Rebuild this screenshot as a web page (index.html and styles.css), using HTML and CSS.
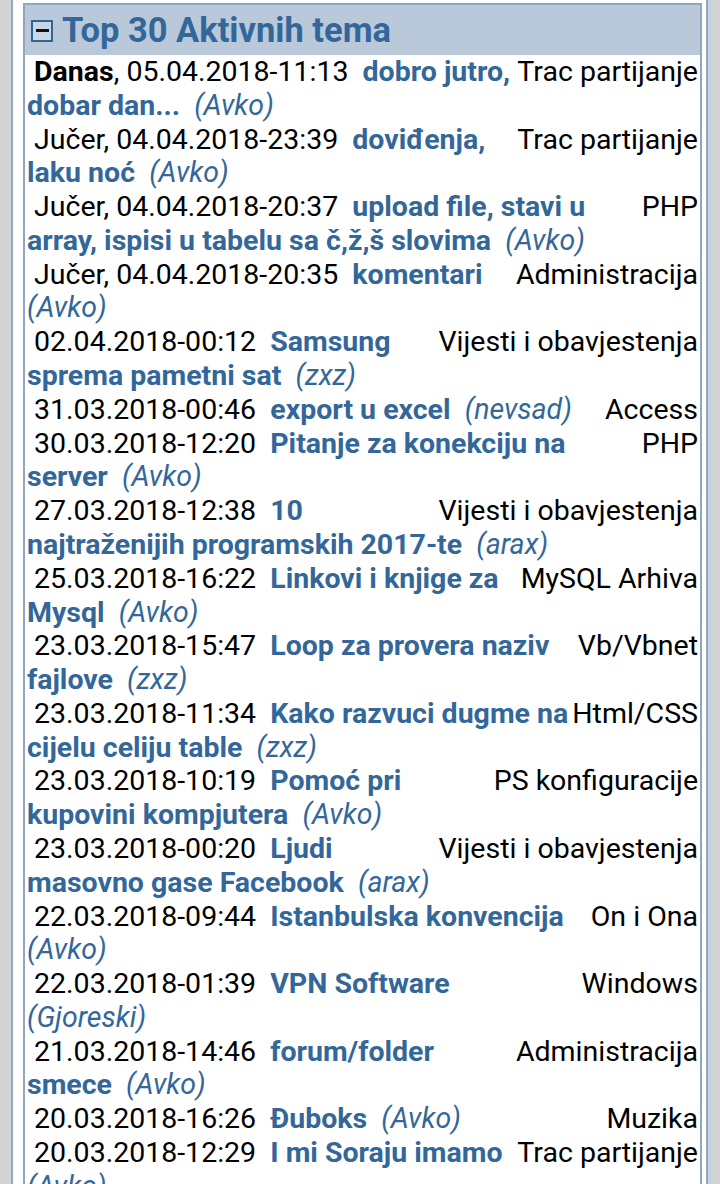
FILE: index.html
```html
<!DOCTYPE html>
<html lang="hr">
<head>
<meta charset="utf-8">
<title>Top 30 Aktivnih tema</title>
<link rel="stylesheet" href="styles.css">
</head>
<body>
<div class="frame">
  <div class="panel">
    <div class="head">
      <span class="toggle"><span class="bar"></span></span>
      <span class="title">Top 30 Aktivnih tema</span>
    </div>
    <div class="list">
      <div class="row"><span class="cat">Trac partijanje</span>&nbsp;<b>Danas</b>, 05.04.2018-11:13&nbsp; <a class="topic">dobro jutro, dobar dan...</a>&nbsp; <i class="author">(Avko)</i></div>
      <div class="row"><span class="cat">Trac partijanje</span>&nbsp;Jučer, 04.04.2018-23:39&nbsp; <a class="topic">doviđenja, laku noć</a>&nbsp; <i class="author">(Avko)</i></div>
      <div class="row"><span class="cat">PHP</span>&nbsp;Jučer, 04.04.2018-20:37&nbsp; <a class="topic">upload file, stavi u array, ispisi u tabelu sa č,ž,š slovima</a>&nbsp; <i class="author">(Avko)</i></div>
      <div class="row"><span class="cat">Administracija</span>&nbsp;Jučer, 04.04.2018-20:35&nbsp; <a class="topic">komentari</a>&nbsp; <i class="author">(Avko)</i></div>
      <div class="row"><span class="cat">Vijesti i obavjestenja</span>&nbsp;02.04.2018-00:12&nbsp; <a class="topic">Samsung sprema pametni sat</a>&nbsp; <i class="author">(zxz)</i></div>
      <div class="row"><span class="cat">Access</span>&nbsp;31.03.2018-00:46&nbsp; <a class="topic">export u excel</a>&nbsp; <i class="author">(nevsad)</i></div>
      <div class="row"><span class="cat">PHP</span>&nbsp;30.03.2018-12:20&nbsp; <a class="topic">Pitanje za konekciju na server</a>&nbsp; <i class="author">(Avko)</i></div>
      <div class="row"><span class="cat">Vijesti i obavjestenja</span>&nbsp;27.03.2018-12:38&nbsp; <a class="topic">10 najtraženijih programskih 2017-te</a>&nbsp; <i class="author">(arax)</i></div>
      <div class="row"><span class="cat">MySQL Arhiva</span>&nbsp;25.03.2018-16:22&nbsp; <a class="topic">Linkovi i knjige za Mysql</a>&nbsp; <i class="author">(Avko)</i></div>
      <div class="row"><span class="cat">Vb/Vbnet</span>&nbsp;23.03.2018-15:47&nbsp; <a class="topic">Loop za provera naziv fajlove</a>&nbsp; <i class="author">(zxz)</i></div>
      <div class="row"><span class="cat">Html/CSS</span>&nbsp;23.03.2018-11:34&nbsp; <a class="topic">Kako razvuci dugme na cijelu celiju table</a>&nbsp; <i class="author">(zxz)</i></div>
      <div class="row"><span class="cat">PS konfiguracije</span>&nbsp;23.03.2018-10:19&nbsp; <a class="topic">Pomoć pri kupovini kompjutera</a>&nbsp; <i class="author">(Avko)</i></div>
      <div class="row"><span class="cat">Vijesti i obavjestenja</span>&nbsp;23.03.2018-00:20&nbsp; <a class="topic">Ljudi masovno gase Facebook</a>&nbsp; <i class="author">(arax)</i></div>
      <div class="row"><span class="cat">On i Ona</span>&nbsp;22.03.2018-09:44&nbsp; <a class="topic">Istanbulska konvencija</a>&nbsp; <i class="author">(Avko)</i></div>
      <div class="row"><span class="cat">Windows</span>&nbsp;22.03.2018-01:39&nbsp; <a class="topic">VPN Software</a>&nbsp; <i class="author">(Gjoreski)</i></div>
      <div class="row"><span class="cat">Administracija</span>&nbsp;21.03.2018-14:46&nbsp; <a class="topic">forum/folder smece</a>&nbsp; <i class="author">(Avko)</i></div>
      <div class="row"><span class="cat">Muzika</span>&nbsp;20.03.2018-16:26&nbsp; <a class="topic">Đuboks</a>&nbsp; <i class="author">(Avko)</i></div>
      <div class="row"><span class="cat">Trac partijanje</span>&nbsp;20.03.2018-12:29&nbsp; <a class="topic">I mi Soraju imamo</a>&nbsp; <i class="author">(Avko)</i></div>
    </div>
  </div>
</div>
</body>
</html>
```
FILE: styles.css
```css
html, body {
  margin: 0;
  padding: 0;
}
body {
  background: #d3d3d3;
  font-family: Roboto, "Noto Sans", sans-serif;
  color: #000;
}
.frame {
  margin: 0 12px 0 11px;
  border-left: 2px solid #93a9c3;
  border-right: 2px solid #93a9c3;
  background: #fff;
  padding: 3px 4px 0 10px;
  min-height: 1184px;
  box-sizing: border-box;
  box-shadow: 3px 0 0 #c5d1dd;
}
.panel {
  border: 2px solid #8ea6c2;
  border-bottom: none;
  background: #fff;
}
.head {
  background: #b9c9da;
  height: 50px;
  display: flex;
  align-items: center;
  padding-left: 6px;
  gap: 9px;
}
.toggle {
  width: 18px;
  height: 18px;
  border: 2px solid #2d6892;
  background: #c9d6e3;
  display: flex;
  align-items: center;
  justify-content: center;
  margin-top: 1px;
}
.bar {
  width: 13px;
  height: 3px;
  background: #111;
}
.title {
  font-weight: bold;
  font-size: 34.5px;
  color: #33679a;
  line-height: 40px;
}
.list {
  padding: 0 2px;
  font-size: 28.5px;
  line-height: 33.78px;
}
.row {
  display: flow-root;
}
.cat {
  float: right;
}
.topic {
  color: #33679a;
  font-weight: bold;
  text-decoration: none;
}
.author {
  color: #33679a;
  font-style: italic;
}
```
